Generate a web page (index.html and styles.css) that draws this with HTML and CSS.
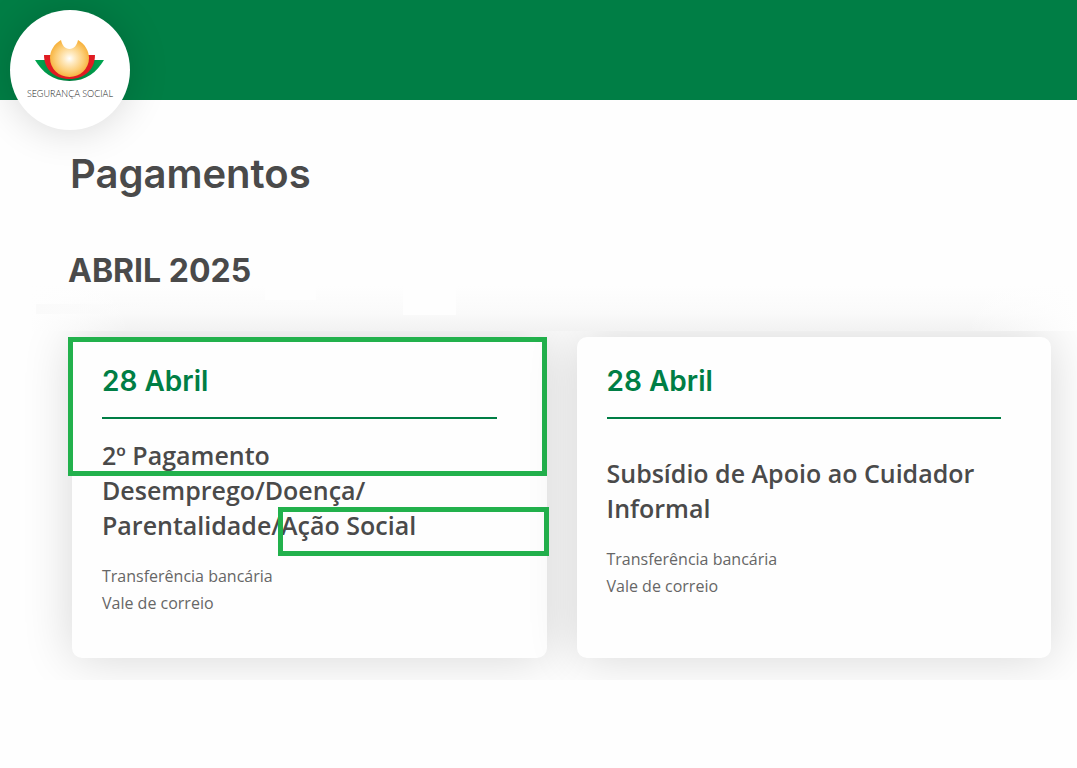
FILE: index.html
```html
<!DOCTYPE html>
<html lang="pt">
<head>
  <meta charset="UTF-8">
  <meta name="viewport" content="width=device-width, initial-scale=1.0">
  <title>Segurança Social - Pagamentos</title>
  <link rel="stylesheet" href="styles.css">
</head>
<body>
  <header class="header">
    <a class="logo" href="#">
      <svg class="logo-mark" viewBox="0 0 70 44" aria-hidden="true">
        <defs>
          <radialGradient id="sun" cx="50%" cy="50%" r="54%">
            <stop offset="0" stop-color="#fff"/>
            <stop offset="0.25" stop-color="#ffebc4"/>
            <stop offset="0.65" stop-color="#fcce78"/>
            <stop offset="1" stop-color="#f6ae35"/>
          </radialGradient>
          <linearGradient id="leaf">
            <stop offset="0" stop-color="#00a651"/>
            <stop offset="0.5" stop-color="#007a3a"/>
            <stop offset="1" stop-color="#00a651"/>
          </linearGradient>
        </defs>
        <path d="M0 21 H69 C62 33 51 42 34.500 42 C18 42 7 33 0 21 Z" fill="url(#leaf)"/>
        <path d="M9 16 H60 C60 30 50 40 34.500 40 C19 40 9 30 9 16 Z" fill="#e01b22"/>
        <path d="M26 1 C27 6 30 10 34.500 10 C39 10 42 6 43 1 C50 5 54 12 54 19 A19.500 19 0 0 1 15 19 C15 12 19 5 26 1 Z" fill="url(#sun)"/>
      </svg>
      <span class="logo-text">SEGURANÇA SOCIAL</span>
    </a>
  </header>

  <main>
    <h1 class="page-title">Pagamentos</h1>
    <h2 class="month">ABRIL 2025</h2>
    <div class="shade"></div>

    <section class="cards">
      <article class="card">
        <h3 class="card-date">28 Abril</h3>
        <div class="card-body">
          <p class="card-name">2º Pagamento<br>Desemprego/Doença/<br>Parentalidade/Ação Social</p>
          <ul class="methods">
            <li>Transferência bancária</li>
            <li>Vale de correio</li>
          </ul>
        </div>
        <div class="mark mark-date"></div>
        <div class="mark mark-name"></div>
      </article>

      <article class="card">
        <h3 class="card-date">28 Abril</h3>
        <div class="card-body">
          <p class="card-name">Subsídio de Apoio ao Cuidador Informal</p>
          <ul class="methods">
            <li>Transferência bancária</li>
            <li>Vale de correio</li>
          </ul>
        </div>
      </article>
    </section>
  </main>
</body>
</html>
```

FILE: styles.css
```css
* {
  box-sizing: border-box;
}

body {
  margin: 0;
  font-family: 'Open Sans', 'Noto Sans', sans-serif;
  background: #fefefe;
  color: #4a4a4a;
}

h1, h2, h3, p, ul {
  margin: 0;
}

.header {
  height: 100px;
  padding: 10px;
  background: #007e45;
}

/* the round badge hangs below the bar */
.logo {
  position: relative;
  width: 120px;
  height: 120px;
  border-radius: 50%;
  background: #fff;
  box-shadow: 0 0 40px rgba(0, 0, 0, 0.16);
  display: flex;
  flex-direction: column;
  align-items: center;
  padding-top: 29px;
  text-decoration: none;
}

.logo-mark {
  width: 70px;
  height: 44px;
}

.logo-text {
  font-family: 'Lato', sans-serif;
  font-weight: 300;
  font-size: 9px;
  line-height: 12px;
  margin-top: 5px;
  color: #222;
  white-space: nowrap;
}

.page-title {
  padding: 44px 70px 0;
  font-family: 'Inter', sans-serif;
  font-weight: 600;
  font-size: 40px;
  line-height: 60px;
}

.month {
  padding: 52px 68px 0;
  font-family: 'Inter', sans-serif;
  font-weight: 700;
  font-size: 32px;
  line-height: 30px;
}

/* soft band above the cards, with two blank patches and a pale strip */
.shade {
  height: 45px;
  background:
    linear-gradient(#fefefe, #fefefe) 403px 0 / 53px 29px no-repeat,
    linear-gradient(#fefefe, #fefefe) 265px 0 / 51px 14px no-repeat,
    linear-gradient(90deg, #fafafa, rgba(250, 250, 250, 0)) 36px 18px / 120px 10px no-repeat,
    linear-gradient(90deg, #fefefe 30px, rgba(254, 254, 254, 0) 130px),
    linear-gradient(270deg, #fefefe, rgba(254, 254, 254, 0) 110px),
    linear-gradient(#fefefe, #fafafa 60%, #f2f2f2);
}

.cards {
  display: grid;
  grid-template-columns: 1fr 1fr;
  gap: 30px;
  padding: 6px 26px 22px 72px;
  overflow: hidden;
}

.card {
  position: relative;
  display: flex;
  flex-direction: column;
  padding: 24px 50px 41px 30px;
  border-radius: 10px;
  background: #fefefe;
  box-shadow: 0 0 50px rgba(0, 0, 0, 0.16);
}

.card-date {
  padding-bottom: 16px;
  border-bottom: 2px solid #007e45;
  font-family: 'Inter', sans-serif;
  font-weight: 600;
  font-size: 28px;
  line-height: 40px;
  color: #007e45;
}

.card-body {
  flex-grow: 1;
  display: flex;
  flex-direction: column;
  justify-content: center;
  padding-top: 19px;
}

.card-name {
  font-weight: 600;
  font-size: 25px;
  line-height: 35px;
}

.methods {
  margin-top: 20px;
  padding: 0;
  list-style: none;
  font-size: 16px;
  line-height: 27px;
  color: #666;
}

/* highlight boxes drawn over the card */
.mark {
  position: absolute;
  border: 5px solid #22b14c;
}

.mark-date {
  top: 0;
  left: -4px;
  right: 0;
  height: 139px;
}

.mark-name {
  top: 170px;
  left: 206px;
  right: -2px;
  height: 49px;
}
```
